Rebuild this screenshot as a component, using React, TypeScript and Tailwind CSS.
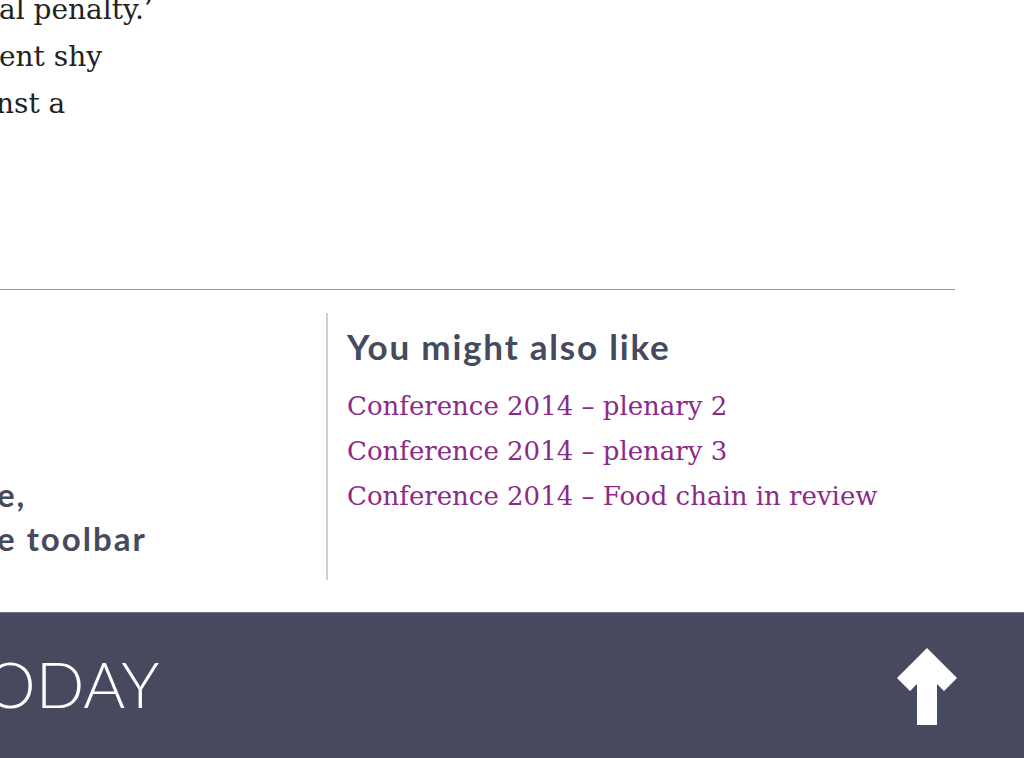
const related = [
  'Conference 2014 – plenary 2',
  'Conference 2014 – plenary 3',
  'Conference 2014 – Food chain in review',
];

function UpArrow() {
  return (
    <svg width="62" height="80" viewBox="0 0 62 80" aria-hidden="true">
      <polygon
        fill="#ffffff"
        points="31,1 61,31 48,44 41,37 41,78 21,78 21,37 14,44 1,31"
      />
    </svg>
  );
}

export default function App() {
  return (
    <div className="w-[1024px] h-[758px] overflow-hidden bg-white flex flex-col">
      <div className="h-[289px] overflow-hidden">
        <div className="-mt-[14px] text-[28px] leading-[47px] text-[#222] font-['DejaVu_Serif',serif]">
          <p className="-ml-[1px] whitespace-nowrap">al penalty.’</p>
          <p className="-ml-[1px] whitespace-nowrap">ent shy</p>
          <p className="-ml-[4px] whitespace-nowrap">nst a</p>
        </div>
      </div>
      <hr className="w-[955px] border-0 border-t border-[#999]" />

      <div className="flex mt-[23px] h-[267px]">
        <div className="w-[326px] overflow-hidden flex flex-col justify-end pb-[20px] font-['Lato',sans-serif] font-bold text-[33px] leading-[44px] tracking-[2px] text-[#464a5e]">
          <p className="-ml-[3px] whitespace-nowrap">e,</p>
          <p className="-ml-[3px] whitespace-nowrap">e toolbar</p>
        </div>
        <div className="w-[2px] bg-[#cfcfd2]" />
        <div className="pl-[19px] pt-[12px]">
          <h2 className="font-['Lato',sans-serif] font-bold text-[35px] leading-[42px] tracking-[1.8px] text-[#464a5e] whitespace-nowrap">
            You might also like
          </h2>
          <ul className="mt-[17px] font-['DejaVu_Serif',serif] text-[26px] leading-[45px] text-[#8c2a87]">
            {related.map((t) => (
              <li key={t}>
                <a href="#" className="whitespace-nowrap">{t}</a>
              </li>
            ))}
          </ul>
        </div>
      </div>

      <footer className="mt-[32px] flex-1 bg-[#474a5e] border-t border-[#6d7082] flex items-center justify-between overflow-hidden">
        <span className="-ml-[15px] -mt-[4px] font-['Lato',sans-serif] font-light text-[64px] leading-none text-white">
          ODAY
        </span>
        <a href="#" className="mr-[66px] mt-[2px]" aria-label="Back to top">
          <UpArrow />
        </a>
      </footer>
    </div>
  );
}
